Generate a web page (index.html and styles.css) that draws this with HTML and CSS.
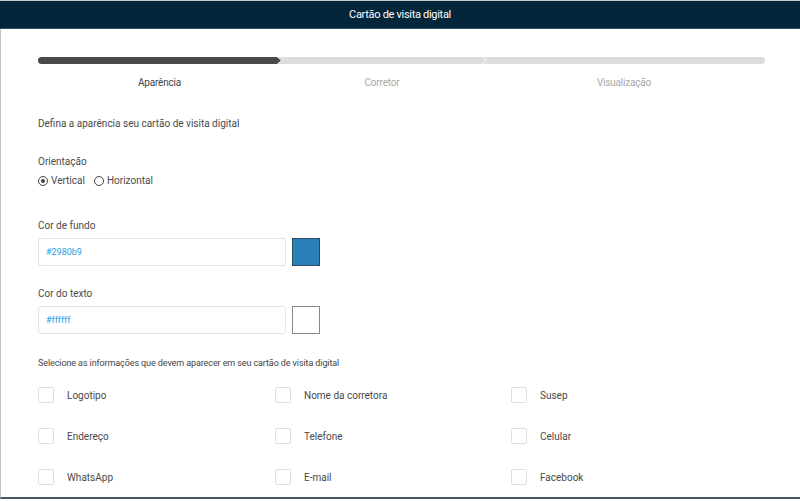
FILE: index.html
```html
<!DOCTYPE html>
<html lang="pt-BR">
<head>
<meta charset="UTF-8">
<title>Cartão de visita digital</title>
<link rel="stylesheet" href="styles.css">
</head>
<body>

<div class="topbar">Cartão de visita digital</div>

<div class="page">
    <div class="steps">
        <div class="step step-first active">
            <div class="seg"></div>
            <span>Aparência</span>
        </div>
        <div class="step step-mid">
            <div class="seg"></div>
            <span>Corretor</span>
        </div>
        <div class="step step-last">
            <div class="seg"></div>
            <span>Visualização</span>
        </div>
    </div>

    <p class="intro">Defina a aparência seu cartão de visita digital</p>

    <div class="field">
        <div class="label">Orientação</div>
        <div class="radios">
            <label class="radio checked"><i></i>Vertical</label>
            <label class="radio"><i></i>Horizontal</label>
        </div>
    </div>

    <div class="field color-field">
        <div class="label">Cor de fundo</div>
        <div class="color-row">
            <input type="text" value="#2980b9">
            <div class="swatch swatch-blue"></div>
        </div>
    </div>

    <div class="field color-field">
        <div class="label">Cor do texto</div>
        <div class="color-row">
            <input type="text" value="#ffffff">
            <div class="swatch swatch-white"></div>
        </div>
    </div>

    <p class="select-title">Selecione as informações que devem aparecer em seu cartão de visita digital</p>

    <div class="options">
        <label class="check"><i></i>Logotipo</label>
        <label class="check"><i></i>Nome da corretora</label>
        <label class="check"><i></i>Susep</label>
        <label class="check"><i></i>Endereço</label>
        <label class="check"><i></i>Telefone</label>
        <label class="check"><i></i>Celular</label>
        <label class="check"><i></i>WhatsApp</label>
        <label class="check"><i></i>E-mail</label>
        <label class="check"><i></i>Facebook</label>
    </div>
</div>

</body>
</html>
```

FILE: styles.css
```css
body {
    margin: 0;
    font-family: Roboto, "Liberation Sans", sans-serif;
    background-color: #fff;
    color: #4a4a4a;
    overflow: hidden;
}

.topbar {
    height: 27px;
    line-height: 27px;
    border-top: 1px solid #c8c8c8;
    border-bottom: 1px solid #3b5262;
    background-color: #04263a;
    color: #fff;
    text-align: center;
    font-size: 11px;
    letter-spacing: -0.3px;
}

.page {
    border-left: 1px solid #c4c4c4;
    border-bottom: 2px solid #4a5560;
    padding: 28px 35px 0 37px;
    height: 440px;
}

/* progress steps */
.steps {
    display: flex;
}

.step {
    display: flex;
    flex-direction: column;
    align-items: center;
}

.step-first { width: 243px; }
.step-mid { width: 208px; margin-left: -3px; }
.step-last { flex: 1; margin-left: -3px; }

.seg {
    align-self: stretch;
    height: 7px;
    background-color: #dcdcdc;
}

.step-first .seg {
    border-radius: 4px 0 0 4px;
    clip-path: polygon(0 0, calc(100% - 4px) 0, 100% 50%, calc(100% - 4px) 100%, 0 100%);
}

.step-mid .seg {
    clip-path: polygon(0 0, calc(100% - 4px) 0, 100% 50%, calc(100% - 4px) 100%, 0 100%, 4px 50%);
}

.step-last .seg {
    border-radius: 0 4px 4px 0;
    clip-path: polygon(0 0, 100% 0, 100% 100%, 0 100%, 4px 50%);
}

.step.active .seg {
    background-color: #4a4a4a;
}

.step span {
    margin-top: 13px;
    font-size: 10px;
    letter-spacing: -0.2px;
    color: #a8a8a8;
}

.step.active span {
    color: #444;
}

.intro {
    margin: 30px 0 0;
    font-size: 10px;
}

.field {
    margin-top: 27px;
}

.label {
    font-size: 10px;
}

.radios {
    display: flex;
    gap: 9px;
    margin-top: 8px;
    font-size: 10px;
}

.radio {
    display: flex;
    align-items: center;
    gap: 3px;
}

.radio i {
    width: 8px;
    height: 8px;
    border: 1px solid #444;
    border-radius: 50%;
    position: relative;
}

.radio.checked i::after {
    content: "";
    position: absolute;
    left: 2px;
    top: 2px;
    width: 4px;
    height: 4px;
    border-radius: 50%;
    background-color: #444;
}

.color-field {
    margin-top: 34px;
}

.color-field + .color-field {
    margin-top: 22px;
}

.color-row {
    display: flex;
    gap: 6px;
    margin-top: 7px;
}

.color-row input {
    width: 248px;
    height: 28px;
    box-sizing: border-box;
    border: 1px solid #e2e2e2;
    border-radius: 3px;
    padding: 0 7px;
    font-family: Roboto, "Liberation Sans", sans-serif;
    font-size: 9px;
    color: #1e9fe6;
    outline: none;
}

.swatch {
    width: 28px;
    height: 28px;
    box-sizing: border-box;
}

.swatch-blue {
    background-color: #2980b9;
    border: 1px solid #2c4a5e;
}

.swatch-white {
    background-color: #fff;
    border: 1px solid #8a8a8a;
}

.select-title {
    margin: 24px 0 0;
    font-size: 9px;
    letter-spacing: -0.1px;
    color: #444;
}

.options {
    display: grid;
    grid-template-columns: 237px 236px 1fr;
    row-gap: 25px;
    margin-top: 19px;
}

.check {
    display: flex;
    align-items: center;
    gap: 13px;
    font-size: 10px;
}

.check i {
    width: 14px;
    height: 14px;
    border: 1px solid #dedede;
    border-radius: 2px;
}
```
